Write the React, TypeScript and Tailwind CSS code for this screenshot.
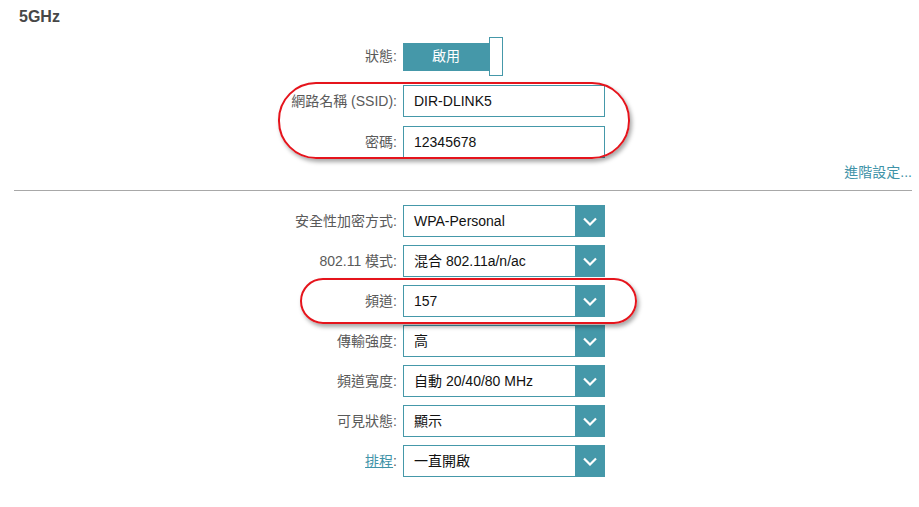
import { ReactNode } from "react";

const font = { fontFamily: '"Liberation Sans", "Noto Sans CJK TC", Arial, sans-serif' };

const Chevron = () => (
  <svg width="14" height="9" viewBox="0 0 14 9" fill="none">
    <path d="M1 1.5 L7 7.5 L13 1.5" stroke="white" strokeWidth="2.2" />
  </svg>
);

const Row = ({ label, children }: { label: ReactNode; children: ReactNode }) => (
  <div className="flex items-center h-[32px]">
    <div className="w-[389px] text-right text-[14px] text-[#5a5a5a] pr-[3px]">{label}</div>
    <div className="ml-[3px]">{children}</div>
  </div>
);

const TextInput = ({ value }: { value: string }) => (
  <div className="w-[202px] h-[32px] border border-[#4598a9] bg-white flex items-center pl-[10px] text-[14px] text-[#111]">
    {value}
  </div>
);

const Select = ({ value }: { value: string }) => (
  <div className="w-[202px] h-[32px] flex">
    <div className="flex-1 border border-r-0 border-[#4598a9] bg-white flex items-center pl-[10px] text-[14px] text-[#111]">
      {value}
    </div>
    <div className="w-[30px] bg-[#4598a9] flex items-center justify-center">
      <Chevron />
    </div>
  </div>
);

export default function App() {
  const selects = [
    { label: "安全性加密方式:", value: "WPA-Personal" },
    { label: "802.11 模式:", value: "混合 802.11a/n/ac" },
    { label: "頻道:", value: "157" },
    { label: "傳輸強度:", value: "高" },
    { label: "頻道寬度:", value: "自動 20/40/80 MHz" },
    { label: "可見狀態:", value: "顯示" },
  ];

  return (
    <div className="relative w-[919px] h-[507px] bg-white overflow-hidden" style={font}>
      <div className="pl-[19px] pt-[7px] text-[16px] leading-[20px] font-bold text-[#474747]">5GHz</div>

      <div className="mt-[10px] pl-[11px] flex flex-col">
        <div className="flex items-center h-[39px]">
          <div className="w-[389px] text-right text-[14px] text-[#5a5a5a] pr-[3px]">狀態:</div>
          <div className="ml-[3px] flex items-center">
            <div className="w-[86px] h-[28px] bg-[#4598a9] text-white text-[14px] flex items-center justify-center">
              啟用
            </div>
            <div className="w-[14px] h-[39px] border border-[#4598a9] bg-white" />
          </div>
        </div>

        <div className="mt-[9px]">
          <Row label="網路名稱 (SSID):">
            <TextInput value="DIR-DLINK5" />
          </Row>
        </div>
        <div className="mt-[9px]">
          <Row label="密碼:">
            <TextInput value="12345678" />
          </Row>
        </div>
      </div>

      <div className="flex justify-end pr-[7px] mt-[4px] h-[20px] text-[14px] leading-[20px] text-[#3f93a8]">
        進階設定...
      </div>
      <div className="ml-[14px] mr-[7px] mt-[8px] border-t border-[#a8a8a8]" />

      <div className="mt-[14px] pl-[11px] flex flex-col gap-[8px]">
        {selects.map((s) => (
          <Row key={s.label} label={s.label}>
            <Select value={s.value} />
          </Row>
        ))}
        <Row
          label={
            <>
              <span className="text-[#3f93a8] underline">排程</span>:
            </>
          }
        >
          <Select value="一直開啟" />
        </Row>
      </div>

      <div className="absolute left-[278px] top-[82px] w-[352px] h-[77px] border-2 border-[#e5141c] rounded-[38px] shadow-[2px_3px_4px_rgba(0,0,0,0.35)]" />
      <div className="absolute left-[300px] top-[278px] w-[337px] h-[46px] border-2 border-[#e5141c] rounded-[23px] shadow-[2px_3px_4px_rgba(0,0,0,0.35)]" />
    </div>
  );
}
